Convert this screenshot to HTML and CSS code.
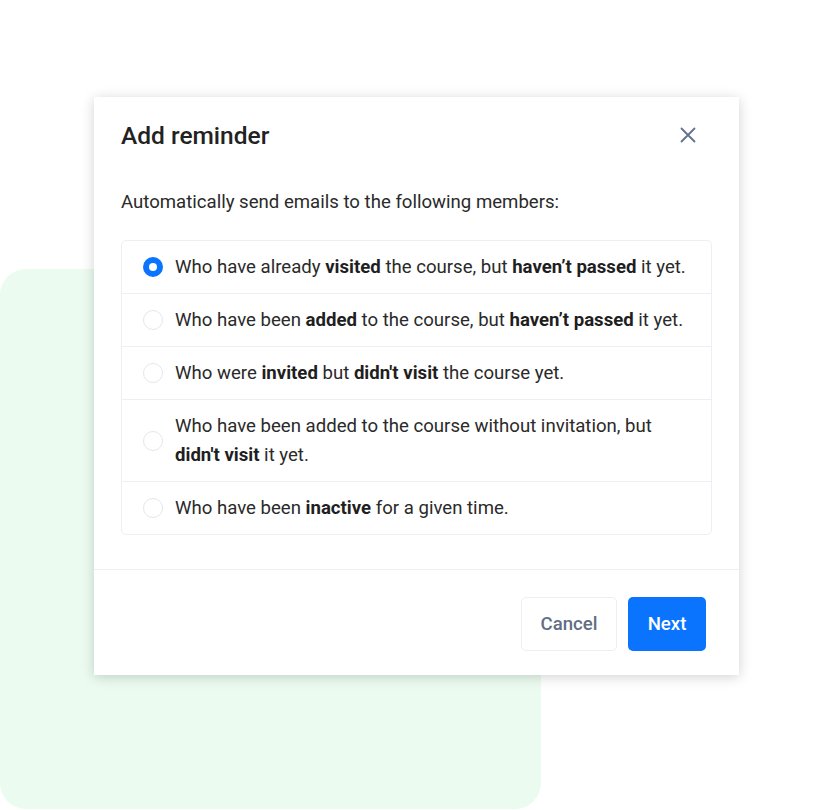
FILE: index.html
```html
<!DOCTYPE html>
<html lang="en">
<head>
    <meta charset="utf-8">
    <title>Add reminder</title>
    <link rel="stylesheet" href="styles.css">
</head>
<body>
    <div class="stage">
        <div class="blob"></div>

        <div class="modal">
            <div class="modal-head">
                <h1>Add reminder</h1>
                <button class="close" aria-label="Close">
                    <svg width="16" height="16" viewBox="0 0 16 16"><path d="M1.5 1.5 L14.5 14.5 M14.5 1.5 L1.5 14.5" stroke="#5f718c" stroke-width="1.8" stroke-linecap="round" fill="none"/></svg>
                </button>
            </div>

            <div class="modal-body">
                <p class="lead">Automatically send emails to the following members:</p>

                <div class="options">
                    <label class="opt"><span class="radio checked"></span><span class="txt">Who have already <b>visited</b> the course, but <b>haven’t passed</b> it yet.</span></label>
                    <label class="opt"><span class="radio"></span><span class="txt">Who have been <b>added</b> to the course, but <b>haven’t passed</b> it yet.</span></label>
                    <label class="opt"><span class="radio"></span><span class="txt">Who were <b>invited</b> but <b>didn't visit</b> the course yet.</span></label>
                    <label class="opt"><span class="radio"></span><span class="txt">Who have been added to the course without invitation, but <b>didn't visit</b> it yet.</span></label>
                    <label class="opt"><span class="radio"></span><span class="txt">Who have been <b>inactive</b> for a given time.</span></label>
                </div>
            </div>

            <div class="modal-foot">
                <button class="btn btn-cancel">Cancel</button>
                <button class="btn btn-next">Next</button>
            </div>
        </div>
    </div>
</body>
</html>
```

FILE: styles.css
```css
html, body {
    margin: 0;
    padding: 0;
    background: #fff;
    font-family: Roboto, "Liberation Sans", sans-serif;
    color: #222;
}

.stage {
    position: relative;
    width: 833px;
    height: 810px;
    overflow: hidden;
}

.blob {
    position: absolute;
    left: 0; top: 269px;
    width: 541px; height: 540px;
    background: #ebfbef;
    border-radius: 26px;
}

.modal {
    position: absolute;
    left: 94px; top: 97px;
    width: 645px;
    background: #fff;
    box-shadow: 0 2px 12px rgba(0, 0, 0, 0.18);
}

.modal-head {
    display: flex;
    align-items: center;
    justify-content: space-between;
    padding: 22px 43px 0 27px;
    height: 32px;
}

.modal-head h1 {
    margin: 0;
    font-size: 24.5px;
    font-weight: 500;
    color: #222;
}

.close {
    border: 0;
    background: none;
    padding: 0;
    width: 16px; height: 16px;
    display: flex;
}

.modal-body {
    padding: 0 27px 34px 27px;
}

.lead {
    margin: 0;
    padding-top: 39px;
    padding-bottom: 26px;
    font-size: 18.6px;
    line-height: 24px;
    color: #2a2a2a;
}

.options {
    border: 1px solid #eceff4;
    border-radius: 5px;
}

.opt {
    display: flex;
    align-items: center;
    padding: 11.5px 20px 11.5px 21px;
    border-top: 1px solid #eceff4;
    font-size: 18.6px;
    line-height: 29px;
    color: #2a2a2a;
}
.opt:first-child {
    border-top: 0;
}
.opt b {
    font-weight: 700;
    color: #1f1f1f;
}

.radio {
    flex: none;
    box-sizing: border-box;
    width: 20px; height: 20px;
    border: 1.5px solid #e3e7ee;
    border-radius: 50%;
    margin-right: 12px;
}
.radio.checked {
    border: 6px solid #0a74ff;
    background: #fff;
}

.txt {
    flex: 1;
}

.modal-foot {
    border-top: 1px solid #eceff4;
    display: flex;
    justify-content: flex-end;
    gap: 11px;
    padding: 27px 33px 24px 0;
}

.btn {
    height: 54px;
    border-radius: 5px;
    font-family: Roboto, "Liberation Sans", sans-serif;
    font-size: 18.6px;
    font-weight: 500;
    padding: 0;
}

.btn-cancel {
    width: 96px;
    background: #fff;
    border: 1px solid #eceff4;
    color: #5f6f84;
}

.btn-next {
    width: 78px;
    background: #0a74ff;
    border: 0;
    color: #fff;
}
```
